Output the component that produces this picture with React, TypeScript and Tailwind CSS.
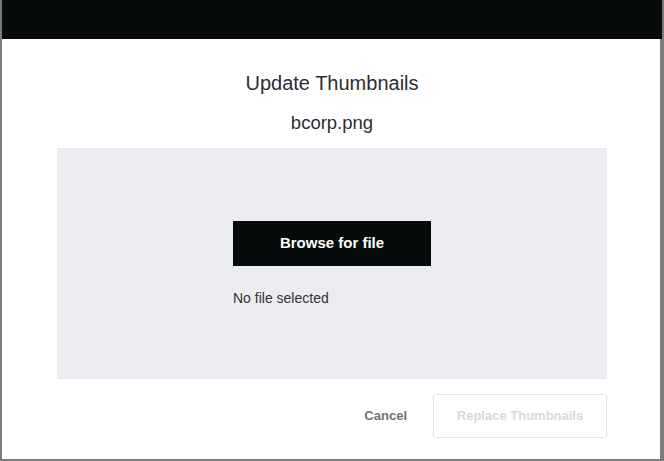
export default function App() {
  return (
    <div className="w-[664px] h-[461px] bg-[#7b7b7b] flex flex-col overflow-hidden font-['Liberation_Sans',Arial,sans-serif]">
      {/* top bar */}
      <div className="h-[39px] ml-[2px] mr-[2px] bg-[#080b0b] shrink-0" />

      {/* modal */}
      <div className="h-[420px] ml-[2px] mr-[4px] pl-[2px] bg-white flex flex-col items-center">
        <h2 className="mt-[32px] text-[20px] leading-[24px] text-[#2b2d36]">Update Thumbnails</h2>
        <p className="mt-[17px] text-[18.5px] leading-[22px] text-[#2b2d36]">bcorp.png</p>

        {/* drop area */}
        <div className="mt-[14px] w-[550px] h-[231px] bg-[#ebecf0] flex justify-center">
          <div className="pt-[73px] w-[198px]">
            <button className="w-[198px] h-[45px] bg-[#080b0b] text-white text-[15px] font-bold">
              Browse for file
            </button>
            <p className="mt-[24px] text-[14px] leading-[16px] text-[#333]">No file selected</p>
          </div>
        </div>

        {/* footer */}
        <div className="mt-[15px] w-[550px] flex justify-end items-center">
          <button className="text-[13px] font-bold text-[#6d717a] mr-[26px]">Cancel</button>
          <button className="w-[174px] h-[44px] border border-[#e3e4e8] rounded-[3px] text-[13px] font-bold text-[#d6d8de]">
            Replace Thumbnails
          </button>
        </div>
      </div>
    </div>
  )
}
